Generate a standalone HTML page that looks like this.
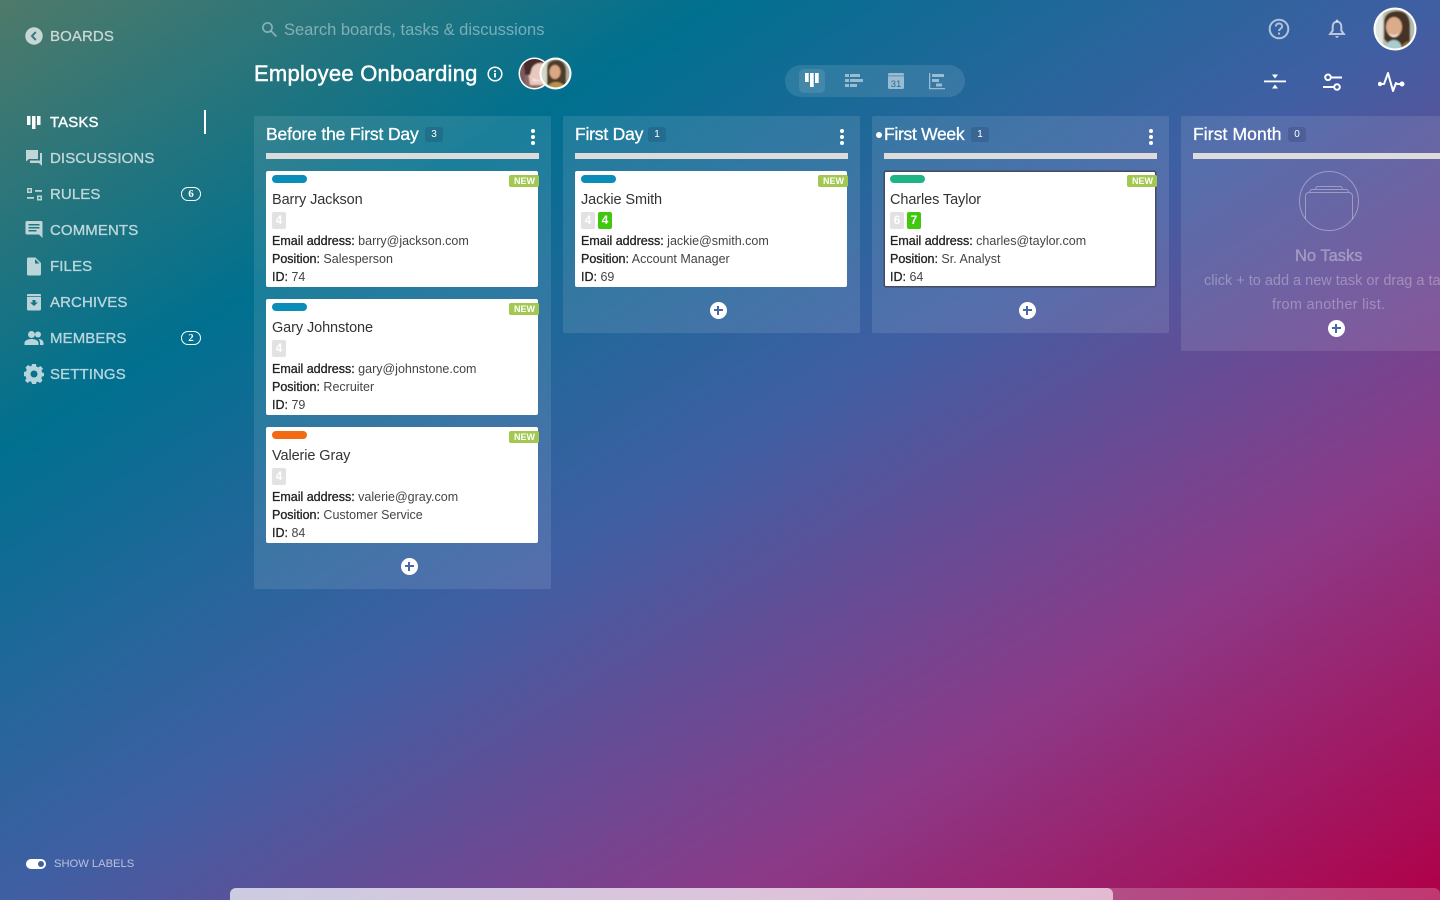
<!DOCTYPE html>
<html lang="en">
<head>
<meta charset="utf-8">
<title>Employee Onboarding</title>
<style>
*{box-sizing:border-box}
html,body{margin:0;padding:0;width:1440px;height:900px;overflow:hidden}
body{position:relative;font-family:"Liberation Sans",Arial,sans-serif;background:linear-gradient(to bottom right,#4f7a69 0%,#00708f 25%,#3f5fa3 50%,#8b3a88 75%,#b00048 100%)}
.abs{position:absolute}
.t{position:absolute;white-space:nowrap}
.nav{position:absolute;left:50px;font-size:15px;line-height:20px;margin-top:1px;color:rgba(255,255,255,.68);font-weight:400;letter-spacing:.1px;-webkit-text-stroke:.35px rgba(255,255,255,.55)}
.ni{position:absolute;fill:rgba(255,255,255,.7)}
.badge{position:absolute;left:181px;width:20px;height:14px;border:1.2px solid #fff;border-radius:7px;color:#fff;font-size:11px;line-height:12px;text-align:center;font-family:"Liberation Serif",serif;font-weight:700}
.col{position:absolute;top:116px;width:297px;background:rgba(255,255,255,.105);border-radius:2px}
.ct{position:absolute;left:12px;top:8px;font-size:17.5px;line-height:21px;color:#fff;white-space:nowrap;-webkit-text-stroke:.3px #fff}
.cnt{position:absolute;top:11px;height:15px;width:18px;border-radius:3px;background:rgba(30,50,90,.22);color:#fff;font-size:10px;line-height:15px;text-align:center}
.bar{position:absolute;left:12px;top:37px;width:273px;height:6px;background:#dcdcdc}
.dots{position:absolute;left:276px;top:13px;width:5px;height:16px}
.dots i{display:block;width:4px;height:4px;border-radius:50%;background:#fff;margin:0 0 2px .5px}
.card{position:absolute;left:12px;width:272px;height:116px;background:#fff;border-radius:2px}
.pill{position:absolute;left:6px;top:4px;width:35px;height:8px;border-radius:4px;background:#0b8db8}
.new{position:absolute;left:243px;top:4px;width:30px;height:12px;border-radius:2px;background:#a3c852;color:#fff;font-size:9px;font-weight:700;line-height:12px;text-align:center;padding-left:1px}
.name{position:absolute;left:6px;top:18.500px;font-size:14.500px;line-height:20px;color:#333;white-space:nowrap;letter-spacing:-.1px}
.chip{position:absolute;top:41px;width:14px;height:17px;border-radius:2px;background:#e2e2e2;color:#fff;font-size:12px;font-weight:700;line-height:17px;text-align:center}
.chip.g{background:#3fc80e}
.ln{position:absolute;left:6px;font-size:12.500px;line-height:16px;color:#444;white-space:nowrap}
.ln b{font-weight:400;color:#222;-webkit-text-stroke:.3px #222}
.l1{top:62px}.l2{top:80px}.l3{top:98px}
.plus{position:absolute;width:17px;height:17px;border-radius:50%;background:#fff}
.plus:before{content:"";position:absolute;left:4px;top:7.500px;width:9px;height:2px;background:#4a68a5}
.plus:after{content:"";position:absolute;left:7.500px;top:4px;width:2px;height:9px;background:#4a68a5}
</style>
</head>
<body>
<svg width="0" height="0" style="position:absolute"><defs><filter id="bl" x="-10%" y="-10%" width="120%" height="120%"><feGaussianBlur stdDeviation=".9"/></filter></defs></svg>

<!-- sidebar -->
<svg class="abs" style="left:25px;top:27px" width="18" height="18" viewBox="0 0 18 18"><circle cx="9" cy="9" r="8.700" fill="rgba(255,255,255,.7)"/><path d="M10.800 5 7 9l3.800 4" fill="none" stroke="#3c7a7c" stroke-width="2"/></svg>
<div class="nav" style="top:26px">BOARDS</div>

<svg class="abs" style="left:26px;top:114px" width="16" height="16" viewBox="0 0 16 16" fill="#fff"><rect x="1" y="2" width="3.500" height="9"/><rect x="6" y="2" width="3.500" height="13"/><rect x="11" y="2" width="3.500" height="9"/></svg>
<div class="nav" style="top:112px;color:#fff;-webkit-text-stroke:.4px #fff">TASKS</div>
<div class="abs" style="left:204px;top:110px;width:2px;height:24px;background:#fff"></div>

<svg class="ni" style="left:25px;top:149px" width="18" height="18" viewBox="0 0 18 18"><path d="M1 1h12v9H4l-3 2.500zM15 4h2v13l-3-3H5v-2.500h10z"/></svg>
<div class="nav" style="top:148px">DISCUSSIONS</div>

<svg class="ni" style="left:26px;top:187px" width="17" height="15" viewBox="0 0 17 15"><path d="M1 1h5v5H1zM2.500 2.500v2h2v-2zM9 3h7v1.800H9zM1 10h7v1.800H1zM11 8.500h5v5h-5zM12.500 10v2h2v-2z" fill-rule="evenodd"/></svg>
<div class="nav" style="top:184px">RULES</div>
<div class="badge" style="top:187px">6</div>

<svg class="ni" style="left:25px;top:221px" width="18" height="18" viewBox="0 0 18 18"><path fill-rule="evenodd" d="M2 0h14a1.500 1.500 0 0 1 1.500 1.500V17L14 13.500H2A1.500 1.500 0 0 1 .5 12V1.500A1.500 1.500 0 0 1 2 0zM3.500 3v1.500h11V3zM3.500 6v1.500h11V6zM3.500 9v1.500h8V9z"/></svg>
<div class="nav" style="top:220px">COMMENTS</div>

<svg class="ni" style="left:26px;top:257px" width="16" height="19" viewBox="0 0 16 19"><path d="M2 .5h7.500L15 6v11a1.500 1.500 0 0 1-1.500 1.500H2A1.500 1.500 0 0 1 1 17V2A1.500 1.500 0 0 1 2 .5zM9 2v4.500h4.500z" fill-rule="evenodd"/></svg>
<div class="nav" style="top:256px">FILES</div>

<svg class="ni" style="left:26px;top:293px" width="16" height="18" viewBox="0 0 16 18"><path fill-rule="evenodd" d="M2 1h12a1 1 0 0 1 1 1v1H1V2a1 1 0 0 1 1-1zM1 3.800h14V16a1.500 1.500 0 0 1-1.500 1.500h-11A1.500 1.500 0 0 1 1 16zM6.500 7v2.500H4L8 13l4-3.500H9.500V7z"/></svg>
<div class="nav" style="top:292px">ARCHIVES</div>

<svg class="ni" style="left:24px;top:330px" width="20" height="16" viewBox="0 0 20 16"><circle cx="7.500" cy="4.500" r="3.500"/><circle cx="14" cy="4.500" r="3"/><path d="M.5 15v-2c0-2.800 4-4 7-4s7 1.200 7 4v2zM14.500 9c2.500.1 5 1.300 5 4v2h-3.500v-2c0-1.700-.6-3-1.500-4z"/></svg>
<div class="nav" style="top:328px">MEMBERS</div>
<div class="badge" style="top:331px">2</div>

<svg class="ni" style="left:24px;top:364px" width="20" height="20" viewBox="0 0 20 20"><path fill-rule="evenodd" d="M8 0h4l.5 2.700 1.700.7L16.500 2 19 4.500l-1.500 2.300.7 1.700L20 9v3l-2 .6-.7 1.700L18.500 16.500 16 19l-2.200-1.400-1.400.6L12 20H8l-.5-2-1.600-.7L3.500 19 1 16.500l1.400-2.300-.7-1.700L0 12V8l2-.5.700-1.700L1.500 3.500 4 1l2.200 1.400 1.400-.7zM10 6.500a3.500 3.500 0 1 0 0 7 3.500 3.500 0 0 0 0-7z"/></svg>
<div class="nav" style="top:364px">SETTINGS</div>

<div class="abs" style="left:26px;top:859px;width:20px;height:10px;border-radius:5px;background:#fff"></div>
<div class="abs" style="left:38px;top:861px;width:6px;height:6px;border-radius:50%;background:#3f5fa3"></div>
<div class="t" style="left:54px;top:856px;font-size:11.200px;line-height:16px;color:rgba(255,255,255,.62)">SHOW LABELS</div>

<!-- search -->
<svg class="abs" style="left:261px;top:21px" width="17" height="17" viewBox="0 0 17 17" fill="none" stroke="rgba(255,255,255,.42)" stroke-width="1.700"><circle cx="6.500" cy="6.500" r="4.600"/><path d="m10 10 5.500 5.500"/></svg>
<div class="t" style="left:284px;top:20px;font-size:16.500px;line-height:20px;color:rgba(255,255,255,.42)">Search boards, tasks &amp; discussions</div>

<!-- title -->
<div class="t" style="left:254px;top:60px;font-size:22px;line-height:28px;color:#fff;letter-spacing:.25px;-webkit-text-stroke:.45px #fff">Employee Onboarding</div>
<svg class="abs" style="left:487px;top:66px" width="16" height="16" viewBox="0 0 16 16"><circle cx="8" cy="8" r="6.800" fill="none" stroke="#fff" stroke-width="1.500"/><rect x="7.100" y="7" width="1.800" height="4.500" fill="#fff"/><rect x="7.100" y="4.300" width="1.800" height="1.800" fill="#fff"/></svg>

<!-- avatars -->
<svg class="abs" style="left:518px;top:57px" width="33" height="33" viewBox="0 0 33 33"><defs><clipPath id="a1"><circle cx="16.500" cy="16.500" r="14.500"/></clipPath></defs><circle cx="16.500" cy="16.500" r="16" fill="#fff"/><g clip-path="url(#a1)"><g filter="url(#bl)"><rect width="33" height="33" fill="#8a6a68"/><rect x="0" width="7" height="33" fill="#7a5a5c"/><path d="M9 6h18v22H12z" fill="#e9c9be"/><path d="M5 0h24v7c-7-2-12-1-15 4l-2 7H7z" fill="#4a2c2c"/><path d="M15 21c3 3 7 3 10 0v3h-10z" fill="#f8f0ec"/></g></g></svg>
<svg class="abs" style="left:539px;top:57px" width="33" height="33" viewBox="0 0 33 33"><defs><clipPath id="a2"><circle cx="16.500" cy="16.500" r="14"/></clipPath></defs><circle cx="16.500" cy="16.500" r="16" fill="#fff"/><g clip-path="url(#a2)"><g filter="url(#bl)"><rect width="33" height="33" fill="#aab09c"/><rect x="0" width="8" height="33" fill="#d5d8c6"/><path d="M8 28V12C8 5 13 3 18 3s9 4 9 11v14z" fill="#4d3a2c"/><ellipse cx="16" cy="15" rx="5.500" ry="7" fill="#d9a882"/><path d="M8 33c1-6 5-8 9-8s9 2 9 8z" fill="#b8924e"/></g></g></svg>

<!-- view switch -->
<div class="abs" style="left:785px;top:65px;width:180px;height:32px;border-radius:16px;background:rgba(255,255,255,.11)"></div>
<div class="abs" style="left:799px;top:69px;width:26px;height:24px;border-radius:5px;background:rgba(255,255,255,.1)"></div>
<svg class="abs" style="left:804px;top:73px" width="16" height="16" viewBox="0 0 16 16" fill="#fff"><rect x="1" y="0" width="3.700" height="9"/><rect x="6" y="0" width="3.700" height="14"/><rect x="11" y="0" width="3.700" height="10"/></svg>
<svg class="abs" style="left:845px;top:73px" width="18" height="16" viewBox="0 0 18 16" fill="rgba(255,255,255,.5)"><rect x="0" y="1" width="4" height="3"/><rect x="5" y="1" width="10" height="3"/><rect x="0" y="6" width="4" height="3"/><rect x="5" y="6" width="13" height="3"/><rect x="0" y="11" width="4" height="3"/><rect x="5" y="11" width="7" height="3"/></svg>
<svg class="abs" style="left:887px;top:72px" width="18" height="18" viewBox="0 0 18 18"><rect x="1" y="1" width="16" height="16" rx="1.500" fill="rgba(255,255,255,.5)"/><rect x="1" y="3.500" width="16" height=".8" fill="rgba(40,90,150,.6)"/><text x="9" y="15" font-size="9.500" text-anchor="middle" font-family="Liberation Sans" fill="#2b6a9c">31</text></svg>
<svg class="abs" style="left:928px;top:72px" width="18" height="18" viewBox="0 0 18 18" fill="rgba(255,255,255,.5)"><path d="M1 1h1.300v15H17v1.300H1z"/><rect x="4" y="2" width="12" height="3"/><rect x="4" y="7" width="7" height="3"/><rect x="8" y="11.500" width="6" height="3"/></svg>

<!-- top right -->
<svg class="abs" style="left:1268px;top:18px" width="22" height="22" viewBox="0 0 22 22" fill="none"><circle cx="11" cy="11" r="9.300" stroke="rgba(255,255,255,.62)" stroke-width="2"/><path d="M7.800 8.500c0-2 1.500-3 3.200-3s3.200 1 3.200 2.800c0 2.400-3.200 2.400-3.200 4.700" stroke="rgba(255,255,255,.62)" stroke-width="1.900"/><rect x="10" y="14.600" width="2" height="2" fill="rgba(255,255,255,.62)"/></svg>
<svg class="abs" style="left:1328px;top:19px" width="18" height="20" viewBox="0 0 18 20"><path fill="none" stroke="rgba(255,255,255,.65)" stroke-width="2" d="M9 2.800c-3 0-4.300 2.300-4.300 5v3.700L2.200 15h13.600l-2.500-3.500V7.800c0-2.700-1.300-5-4.300-5z"/><circle cx="9" cy="1.800" r="1.300" fill="rgba(255,255,255,.65)"/><path d="M7.300 17h3.400a1.700 1.700 0 0 1-3.400 0z" fill="rgba(255,255,255,.65)"/></svg>
<svg class="abs" style="left:1373px;top:7px" width="44" height="44" viewBox="0 0 44 44"><defs><clipPath id="a3"><circle cx="22" cy="22" r="19.500"/></clipPath></defs><circle cx="22" cy="22" r="21.500" fill="#fff"/><g clip-path="url(#a3)"><g filter="url(#bl)"><rect width="44" height="44" fill="#b8bdae"/><rect x="0" width="10" height="44" fill="#e2e6de"/><path d="M11 32V16C11 7 17 4 25 4s12 6 12 15v25H22z" fill="#463228"/><ellipse cx="21" cy="20" rx="8" ry="10" fill="#dcac88"/><path d="M16 26c3 3 7 3 10 0-1 3-3 4-5 4s-4-1-5-4z" fill="#f6eee8"/><path d="M12 44c0-8 5-11 9-11s8 3 8 11z" fill="#a9cccc"/><path d="M28 44c0-6 3-9 9-10v10z" fill="#8d7036"/></g></g></svg>

<svg class="abs" style="left:1263px;top:73px" width="24" height="18" viewBox="0 0 24 18" fill="#fff"><rect x="1" y="7.500" width="22" height="1.800"/><path d="m9 1.500 3 4 3-4zM9 15.500l3-4 3 4z"/></svg>
<svg class="abs" style="left:1322px;top:73px" width="22" height="19" viewBox="0 0 22 19" fill="none" stroke="#fff" stroke-width="2"><circle cx="6" cy="4.300" r="2.800"/><path d="M9 4.500h11M1 14h11"/><circle cx="15" cy="14" r="2.800"/></svg>
<svg class="abs" style="left:1378px;top:71px" width="27" height="22" viewBox="0 0 27 22" fill="none" stroke="#fff" stroke-width="2" stroke-linejoin="round"><path d="M2 13h4l4-11 5 18 3-8 1 1h5"/><circle cx="2" cy="13" r="1.200" fill="#fff"/><circle cx="24" cy="13" r="1.500" fill="#fff"/></svg>

<!-- column 1 -->
<div class="col" style="left:254px;height:473px">
  <div class="ct" style="letter-spacing:-.15px">Before the First Day</div><div class="cnt" style="left:171px">3</div>
  <div class="dots"><i></i><i></i><i></i></div>
  <div class="bar"></div>
  <div class="card" style="top:55px"><div class="pill"></div><div class="new">NEW</div><div class="name">Barry Jackson</div><div class="chip" style="left:6px">4</div><div class="ln l1"><b>Email address:</b> barry@jackson.com</div><div class="ln l2"><b>Position:</b> Salesperson</div><div class="ln l3"><b>ID:</b> 74</div></div>
  <div class="card" style="top:183px"><div class="pill"></div><div class="new">NEW</div><div class="name">Gary Johnstone</div><div class="chip" style="left:6px">4</div><div class="ln l1"><b>Email address:</b> gary@johnstone.com</div><div class="ln l2"><b>Position:</b> Recruiter</div><div class="ln l3"><b>ID:</b> 79</div></div>
  <div class="card" style="top:311px"><div class="pill" style="background:#f26a12"></div><div class="new">NEW</div><div class="name">Valerie Gray</div><div class="chip" style="left:6px">4</div><div class="ln l1"><b>Email address:</b> valerie@gray.com</div><div class="ln l2"><b>Position:</b> Customer Service</div><div class="ln l3"><b>ID:</b> 84</div></div>
  <div class="plus" style="left:146.500px;top:441.500px"></div>
</div>

<!-- column 2 -->
<div class="col" style="left:563px;height:217px">
  <div class="ct" style="letter-spacing:-.2px">First Day</div><div class="cnt" style="left:85px">1</div>
  <div class="dots"><i></i><i></i><i></i></div>
  <div class="bar"></div>
  <div class="card" style="top:55px"><div class="pill"></div><div class="new">NEW</div><div class="name">Jackie Smith</div><div class="chip" style="left:6px">4</div><div class="chip g" style="left:23px">4</div><div class="ln l1"><b>Email address:</b> jackie@smith.com</div><div class="ln l2"><b>Position:</b> Account Manager</div><div class="ln l3"><b>ID:</b> 69</div></div>
  <div class="plus" style="left:146.500px;top:185.500px"></div>
</div>

<!-- column 3 -->
<div class="col" style="left:872px;height:217px">
  <div class="abs" style="left:4px;top:16px;width:6px;height:6px;border-radius:50%;background:#fff"></div>
  <div class="ct" style="letter-spacing:-.3px">First Week</div><div class="cnt" style="left:99px">1</div>
  <div class="dots"><i></i><i></i><i></i></div>
  <div class="bar"></div>
  <div class="card" style="top:55px;border:1px solid #454b60;box-shadow:0 0 0 .5px #454b60"><div style="position:absolute;left:-1px;top:-1px;width:272px;height:116px"><div class="pill" style="background:#1fb487"></div><div class="new">NEW</div><div class="name">Charles Taylor</div><div class="chip" style="left:6px">6</div><div class="chip g" style="left:23px">7</div><div class="ln l1"><b>Email address:</b> charles@taylor.com</div><div class="ln l2"><b>Position:</b> Sr. Analyst</div><div class="ln l3"><b>ID:</b> 64</div></div></div>
  <div class="plus" style="left:146.500px;top:185.500px"></div>
</div>

<!-- column 4 -->
<div class="col" style="left:1181px;height:235px;width:297px">
  <div class="ct" style="letter-spacing:.1px">First Month</div><div class="cnt" style="left:107px">0</div>
  <div class="bar"></div>
  <svg class="abs" style="left:118px;top:55px" width="60" height="60" viewBox="0 0 60 60" fill="none" stroke="rgba(255,255,255,.35)" stroke-width="1"><circle cx="30" cy="30" r="29.500"/><path d="M6.500 48V25a3.500 3.500 0 0 1 3.500-3.500h40a3.500 3.500 0 0 1 3.500 3.500v23M10 21.500l2-3h36l2 3M16 18.500l2-3h24l2 3"/></svg>
  <div class="t" style="left:114px;top:130px;font-size:16.500px;line-height:20px;color:rgba(255,255,255,.33);-webkit-text-stroke:.3px rgba(255,255,255,.3)">No Tasks</div>
  <div class="t" style="left:23px;top:155px;font-size:14.500px;line-height:20px;color:rgba(255,255,255,.3)">click + to add a new task or drag a task</div>
  <div class="t" style="left:91px;top:179px;font-size:14.500px;line-height:20px;color:rgba(255,255,255,.3);letter-spacing:.3px">from another list.</div>
  <div class="plus" style="left:146.500px;top:203.500px"></div>
</div>

<!-- scrollbar -->
<div class="abs" style="left:230px;top:888px;width:1210px;height:12px;border-radius:6px 6px 0 0;background:rgba(255,255,255,.22)"></div>
<div class="abs" style="left:230px;top:888px;width:883px;height:12px;border-radius:6px 6px 0 0;background:rgba(255,255,255,.62)"></div>

</body>
</html>
